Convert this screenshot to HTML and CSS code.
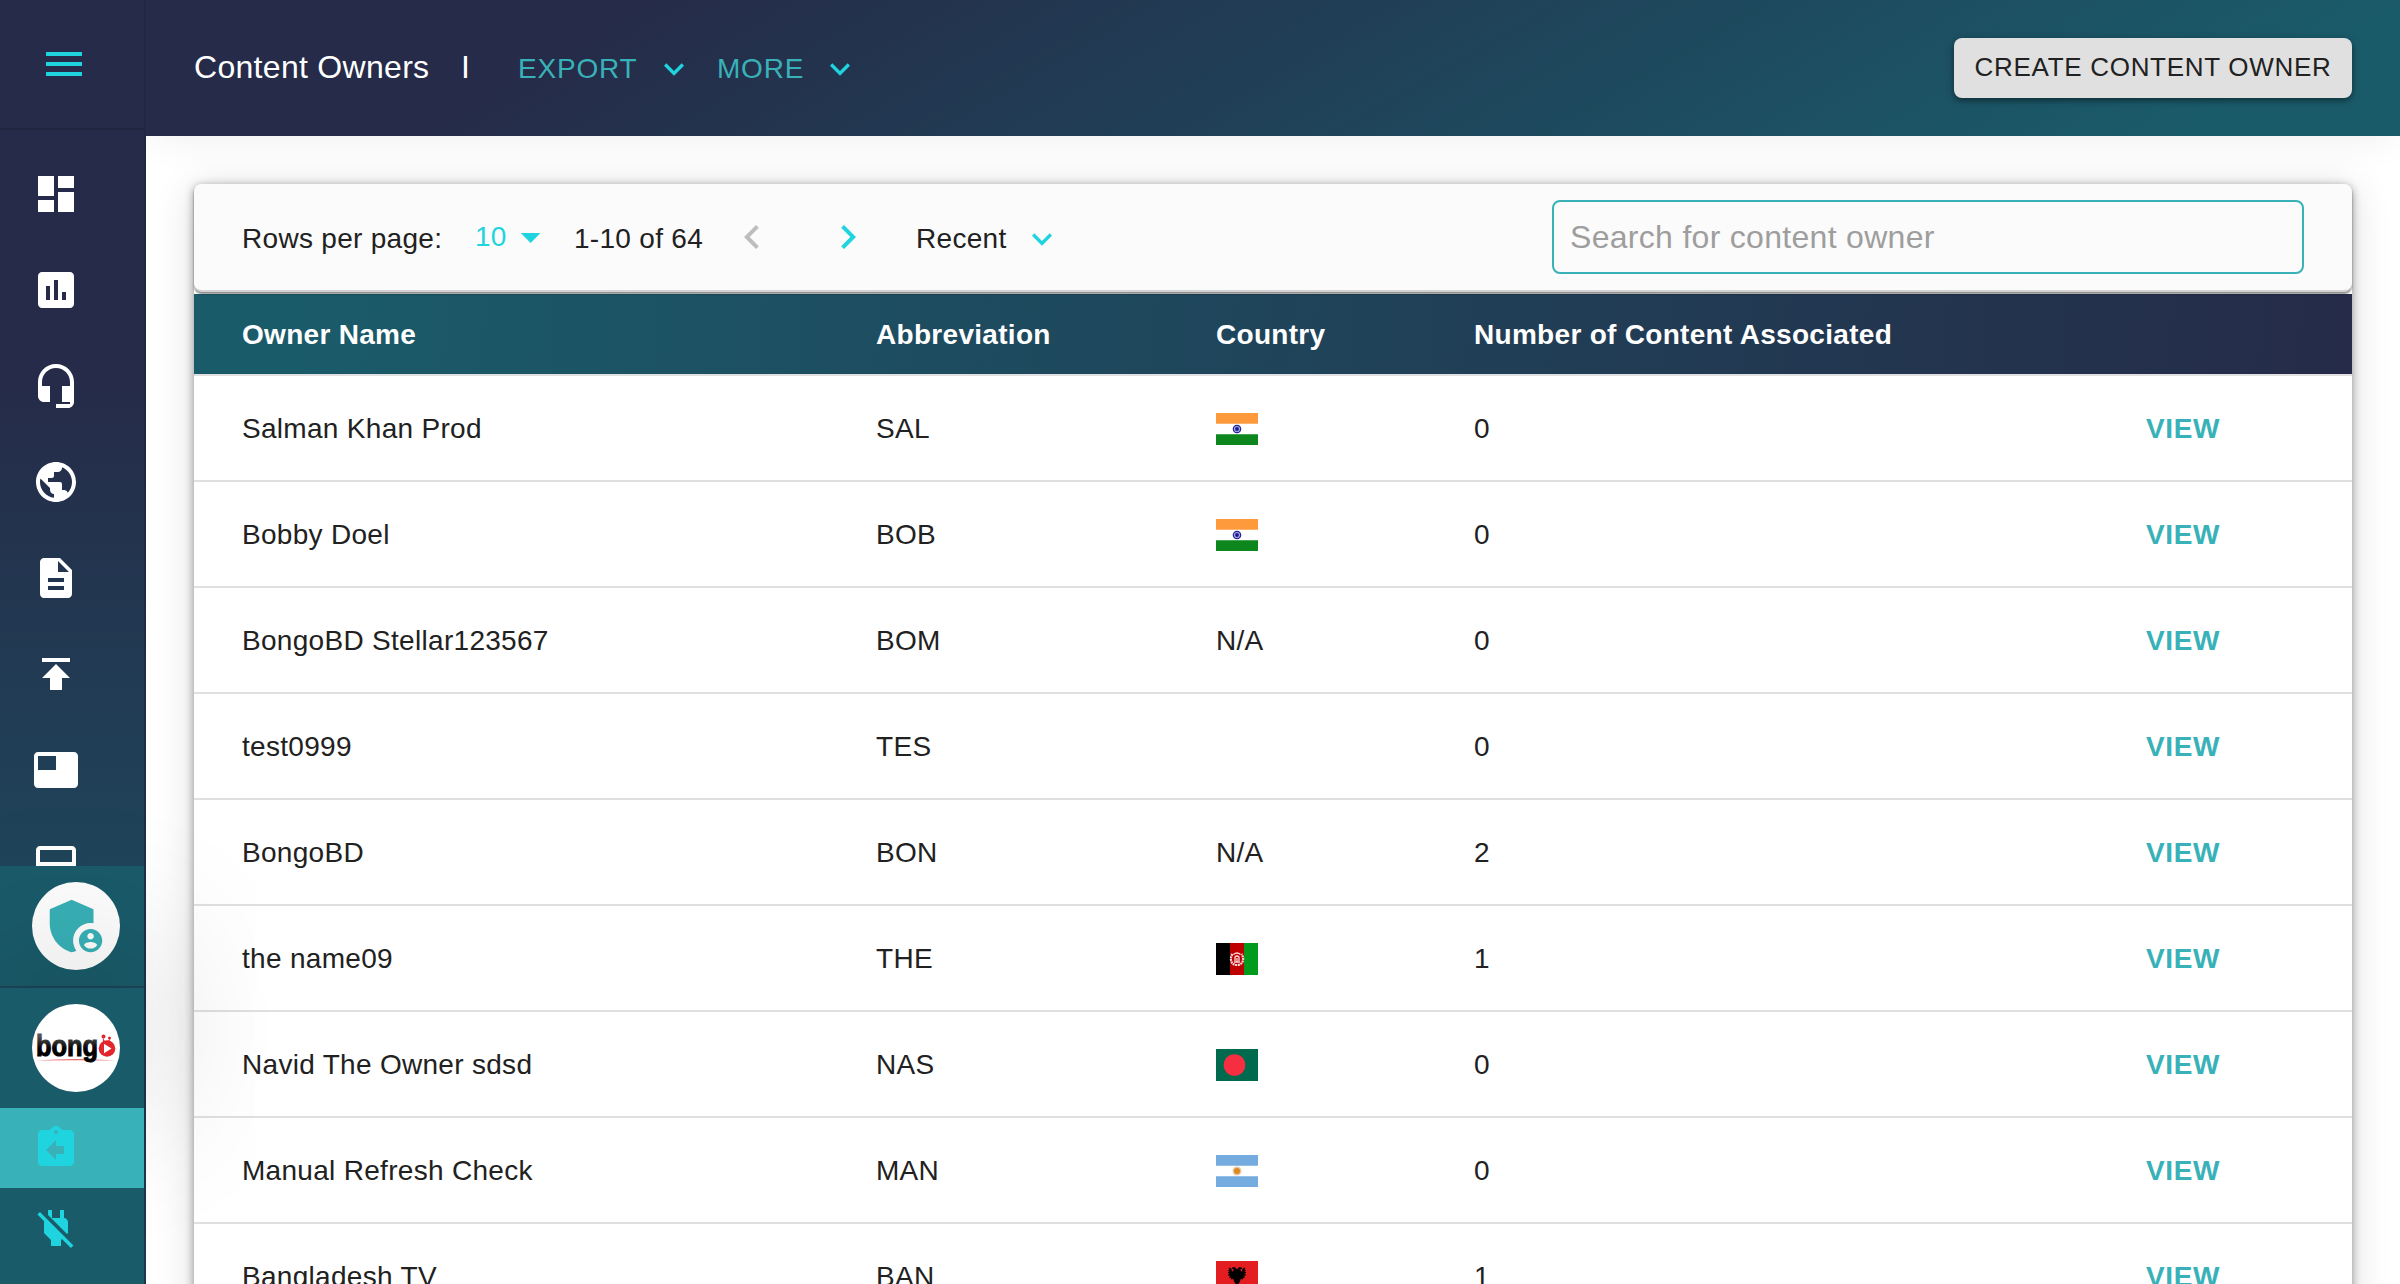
FILE: index.html
```html
<!DOCTYPE html>
<html lang="en">
<head>
<meta charset="utf-8">
<title>Content Owners</title>
<link rel="stylesheet" href="styles.css">
</head>
<body>
<svg class="defs" width="0" height="0" aria-hidden="true">
  <symbol id="chevron-down" viewBox="0 0 24 24"><path d="M7.41 8.59L12 13.17l4.59-4.58L18 10l-6 6-6-6 1.41-1.41z"/></symbol>
  <symbol id="flag-in" viewBox="0 0 42 32"><path fill="#fff" d="M0 0h42v32H0z"/><path fill="#ff9a3c" d="M0 0h42v10.7H0z"/><path fill="#0c861d" d="M0 21.3h42V32H0z"/><circle cx="21" cy="16" r="3.7" fill="#a5a5dc" stroke="#22229a" stroke-width="1.2"/><circle cx="21" cy="16" r="1.9" fill="#1a1a96"/></symbol>
  <symbol id="flag-af" viewBox="0 0 42 32"><path d="M0 0h14v32H0z"/><path fill="#bf0000" d="M14 0h14v32H14z"/><path fill="#009a1c" d="M28 0h14v32H28z"/><g fill="none" stroke="#fff" stroke-opacity=".85"><path stroke-width="2.2" stroke-dasharray="2 .6" d="M16.500 11c-3 4-2 11 4.500 11s7.500-7 4.500-11"/><path stroke-width="1.300" d="M17.500 11.500q3.500-3 7 0M18 19h6M19 18v-4q2-2 4 0v4M21 15v4"/></g></symbol>
  <symbol id="flag-bd" viewBox="0 0 42 32"><path fill="#006a4e" d="M0 0h42v32H0z"/><circle cx="18.500" cy="16" r="10.800" fill="#f62e42"/></symbol>
  <symbol id="flag-ar" viewBox="0 0 42 32"><path fill="#fff" d="M0 0h42v32H0z"/><path fill="#74acdf" d="M0 0h42v10.7H0zM0 21.300h42V32H0z"/><circle cx="21" cy="16" r="4.500" fill="#d9a26a" fill-opacity=".6"/><circle cx="21" cy="16" r="3" fill="#d98a1c"/></symbol>
  <symbol id="flag-al" viewBox="0 0 42 32"><path fill="#e41e20" d="M0 0h42v32H0z"/><path stroke="#000" stroke-width=".8" d="M21 9l-2-2.500-3 .500 2 1.500-.5 2.500-2-.5-.5-3-2-.5 1 2-1.500.5 1.500 1.500-2 .5 2.300 1.500-2 1 2.700 1-1.500 1.300 2.500.2-1 1.500 2.500-.5 1 3 2.500 4 2.500-4 1-3 2.500.5-1-1.500 2.500-.2-1.500-1.300 2.700-1-2-1 2.300-1.500-2-.5 1.500-1.500-1.500-.5 1-2-2 .5-.5 3-2 .5-.5-2.500 2-1.500-3-.5z"/></symbol>
</svg>

<div class="app">
  <aside class="sidebar">
    <div class="sidebar-top">
      <svg class="icon cyan" viewBox="0 0 24 24"><path d="M3 18h18v-2H3v2zm0-5h18v-2H3v2zm0-7v2h18V6H3z"/></svg>
    </div>
    <nav class="nav">
      <a><svg class="icon" viewBox="0 0 24 24"><path d="M3 13h8V3H3v10zm0 8h8v-6H3v6zm10 0h8V11h-8v10zm0-18v6h8V3h-8z"/></svg></a>
      <a><svg class="icon" viewBox="0 0 24 24"><path d="M19 3H5c-1.100 0-2 .9-2 2v14c0 1.100.9 2 2 2h14c1.100 0 2-.9 2-2V5c0-1.100-.9-2-2-2zM9 17H7v-7h2v7zm4 0h-2V7h2v10zm4 0h-2v-4h2v4z"/></svg></a>
      <a><svg class="icon" viewBox="0 0 24 24"><path d="M12 1c-4.970 0-9 4.030-9 9v7c0 1.660 1.340 3 3 3h3v-8H5v-2c0-3.870 3.130-7 7-7s7 3.130 7 7v2h-4v8h4v1h-7v2h6c1.660 0 3-1.340 3-3V10c0-4.970-4.030-9-9-9z"/></svg></a>
      <a><svg class="icon" viewBox="0 0 24 24"><path d="M12 2C6.480 2 2 6.480 2 12s4.480 10 10 10 10-4.480 10-10S17.520 2 12 2zm-1 17.930c-3.950-.49-7-3.850-7-7.930 0-.62.08-1.210.21-1.790L9 15v1c0 1.100.9 2 2 2v1.930zm6.900-2.540c-.26-.81-1-1.390-1.900-1.390h-1v-3c0-.55-.45-1-1-1H8v-2h2c.55 0 1-.45 1-1V7h2c1.100 0 2-.9 2-2v-.41c2.930 1.190 5 4.060 5 7.410 0 2.080-.8 3.970-2.100 5.390z"/></svg></a>
      <a><svg class="icon" viewBox="0 0 24 24"><path d="M14 2H6c-1.100 0-1.990.9-1.990 2L4 20c0 1.100.89 2 1.990 2H18c1.100 0 2-.9 2-2V8l-6-6zm2 16H8v-2h8v2zm0-4H8v-2h8v2zm-3-5V3.500L18.500 9H13z"/></svg></a>
      <a><svg class="icon" viewBox="0 0 24 24"><path d="M5 4v2h14V4H5zm0 10h4v6h6v-6h4l-7-7-7 7z"/></svg></a>
      <a><svg class="icon" viewBox="0 0 24 24"><path d="M21 3H3c-1.100 0-2 .9-2 2v14c0 1.100.9 2 2 2h18c1.100 0 2-.9 2-2V5c0-1.100-.9-2-2-2zm-9 9H3V5h9v7z"/></svg></a>
      <a><svg class="icon" viewBox="0 0 24 24"><path d="M20 2H4c-1.100 0-2 .9-2 2v8.500h20V4c0-1.100-.9-2-2-2zm0 8H4V4h16v6z"/></svg></a>
    </nav>
    <div class="account admin">
      <div class="avatar">
        <svg class="shield" viewBox="0 0 24 24"><path d="M17 11c.34 0 .67.04 1 .09V6.270L10.500 3 3 6.270v4.910c0 4.540 3.200 8.790 7.500 9.820.55-.13 1.080-.32 1.600-.55-.69-.98-1.100-2.170-1.100-3.450 0-3.310 2.690-6 6-6z"/><path d="M17 13c-2.210 0-4 1.790-4 4s1.790 4 4 4 4-1.790 4-4-1.790-4-4-4zm0 1.380c.62 0 1.120.51 1.120 1.120s-.51 1.120-1.120 1.120-1.120-.51-1.120-1.120.5-1.120 1.120-1.120zm0 5.370c-.93 0-1.740-.46-2.240-1.170.05-.72 1.510-1.080 2.240-1.080s2.190.36 2.240 1.080c-.5.71-1.310 1.170-2.240 1.170z"/></svg>
      </div>
    </div>
    <div class="account tenant">
      <div class="avatar">
        <svg class="bongo" viewBox="0 0 88 88">
          <defs><linearGradient id="ink" x1="0" y1="0" x2="0" y2="1"><stop offset=".2" stop-color="#555"/><stop offset=".6" stop-color="#000"/></linearGradient></defs>
          <path fill="#e8696c" d="M4 56.600q40-3 80 0-40-.6-80 0z"/>
          <text class="bongo-word" x="4" y="51.500" textLength="62" lengthAdjust="spacingAndGlyphs" fill="url(#ink)" stroke="url(#ink)">bong</text>
          <g fill="#e3262c"><circle cx="75" cy="44.500" r="8.300"/><circle cx="71.500" cy="32.500" r="2"/><circle cx="77.500" cy="34" r="1.500"/><path d="M70.700 33l2.300 5h-1.800zM78.200 34l-1 4h-1.800z"/></g>
          <path fill="#fff" d="M72 39.800v9.400l7.500-4.700z"/>
        </svg>
      </div>
    </div>
    <div class="quick">
      <a class="active"><svg class="icon cyan" viewBox="0 0 24 24"><path d="M19 3h-4.180C14.400 1.840 13.300 1 12 1s-2.400.84-2.820 2H5c-1.100 0-2 .9-2 2v14c0 1.100.9 2 2 2h14c1.100 0 2-.9 2-2V5c0-1.100-.9-2-2-2zm-7 0c.55 0 1 .45 1 1s-.45 1-1 1-1-.45-1-1 .45-1 1-1zm4 12h-4v3l-5-5 5-5v3h4v4z"/></svg></a>
      <a><svg class="icon cyan" viewBox="0 0 24 24"><path d="M18 14.490V9c0-1-1.010-2.010-2-2V3h-2v4h-4V3H8v2.480l9.510 9.500.49-.49zm-1.760 1.770L7.200 7.200l-.01.01L3.980 4 2.710 5.250l3.360 3.360C6.040 8.740 6 8.870 6 9v5.480L9.500 18v3h5v-3l.48-.48L19.450 22l1.260-1.280-4.470-4.460z"/></svg></a>
    </div>
  </aside>

  <div class="page">
    <header class="header">
      <h1 class="title">Content Owners</h1>
      <span class="divider">I</span>
      <button class="menu">EXPORT<svg viewBox="0 0 24 24"><use href="#chevron-down"/></svg></button>
      <button class="menu more">MORE<svg viewBox="0 0 24 24"><use href="#chevron-down"/></svg></button>
      <button class="create">CREATE CONTENT OWNER</button>
    </header>

    <main class="main">
      <section class="card">
        <div class="toolbar">
          <span class="rows-label">Rows per page:</span>
          <span class="rows-value">10<svg viewBox="0 0 24 24"><path d="M7 10l5 5 5-5z"/></svg></span>
          <span class="range">1-10 of 64</span>
          <svg class="pager prev" viewBox="0 0 24 24"><path d="M15.410 7.410L14 6l-6 6 6 6 1.410-1.410L10.830 12z"/></svg>
          <svg class="pager next" viewBox="0 0 24 24"><path d="M10 6L8.590 7.410 13.170 12l-4.580 4.590L10 18l6-6z"/></svg>
          <span class="sort">Recent<svg viewBox="0 0 24 24"><use href="#chevron-down"/></svg></span>
          <input class="search" type="text" placeholder="Search for content owner">
        </div>
        <div class="table">
          <div class="row head"><span>Owner Name</span><span>Abbreviation</span><span>Country</span><span>Number of Content Associated</span><span></span></div>
          <div class="row"><span>Salman Khan Prod</span><span>SAL</span><span><svg class="flag"><use href="#flag-in"/></svg></span><span>0</span><a>VIEW</a></div>
          <div class="row"><span>Bobby Doel</span><span>BOB</span><span><svg class="flag"><use href="#flag-in"/></svg></span><span>0</span><a>VIEW</a></div>
          <div class="row"><span>BongoBD Stellar123567</span><span>BOM</span><span>N/A</span><span>0</span><a>VIEW</a></div>
          <div class="row"><span>test0999</span><span>TES</span><span></span><span>0</span><a>VIEW</a></div>
          <div class="row"><span>BongoBD</span><span>BON</span><span>N/A</span><span>2</span><a>VIEW</a></div>
          <div class="row"><span>the name09</span><span>THE</span><span><svg class="flag"><use href="#flag-af"/></svg></span><span>1</span><a>VIEW</a></div>
          <div class="row"><span>Navid The Owner sdsd</span><span>NAS</span><span><svg class="flag"><use href="#flag-bd"/></svg></span><span>0</span><a>VIEW</a></div>
          <div class="row"><span>Manual Refresh Check</span><span>MAN</span><span><svg class="flag"><use href="#flag-ar"/></svg></span><span>0</span><a>VIEW</a></div>
          <div class="row"><span>Bangladesh TV</span><span>BAN</span><span><svg class="flag"><use href="#flag-al"/></svg></span><span>1</span><a>VIEW</a></div>
        </div>
      </section>
    </main>
  </div>
</div>
</body>
</html>
```

FILE: styles.css
```css
:root {
  --navy: #252b48;
  --teal: #1a5b6a;
  --accent: #38b2b8;
  --cyan: #1fd4df;
  --line: #e0e0e0;
}

* { box-sizing: border-box; }

body {
  margin: 0;
  height: 1284px;
  overflow: hidden;
  background: #fff;
  color: #212121;
  font: 28px "Liberation Sans", Helvetica, Arial, sans-serif;
  letter-spacing: 0.3px;
}

.defs { display: none; }

.app {
  display: flex;
  height: 1284px;
  overflow: hidden;
}

/* Sidebar */
.sidebar {
  position: relative;
  z-index: 2;
  display: flex;
  flex-direction: column;
  flex: none;
  width: 146px;
  border-right: 2px solid rgba(30, 38, 62, 0.65);
  background: linear-gradient(180deg, var(--navy) 30%, var(--teal) 100%) border-box;
}

.sidebar-top {
  flex: none;
  height: 130px;
  padding: 40px 0 0 40px;
  border-bottom: 2px solid #20263f;
}

.icon {
  display: block;
  width: 48px;
  height: 48px;
  fill: #fff;
}

.icon.cyan { fill: var(--cyan); }

.nav {
  display: flex;
  flex-direction: column;
  gap: 48px;
  flex: none;
  height: 736px;
  padding: 40px 0 0 32px;
  overflow: hidden;
}

.account {
  flex: none;
  height: 122px;
  padding: 16px 0 0 32px;
  background: var(--teal);
}

.account.admin { border-bottom: 2px solid #1d4458; }

.account.tenant {
  height: 120px;
  box-shadow: 0 -22px 170px rgba(0, 0, 0, 0.23);
}

.avatar {
  display: flex;
  align-items: center;
  justify-content: center;
  width: 88px;
  height: 88px;
  border-radius: 50%;
  background: #fff;
}

.shield {
  width: 70px;
  height: 70px;
  fill: var(--accent);
}

.bongo {
  width: 88px;
  height: 88px;
}

.bongo-word {
  font: bold 29px "Liberation Sans", Arial, sans-serif;
  letter-spacing: 0;
  stroke-width: 1px;
}

.quick {
  position: relative;
  flex: 1;
  background: var(--teal);
}

.quick a {
  display: flex;
  align-items: center;
  height: 80px;
  padding-left: 32px;
}

.quick .active { background: var(--accent); }

/* Header */
.page {
  flex: 1;
  min-width: 0;
}

.header {
  display: flex;
  align-items: center;
  height: 136px;
  padding: 0 48px 0 48px;
  background: linear-gradient(150deg, var(--navy) 20%, var(--teal) 91%);
  box-shadow: 0 8px 40px -8px rgba(0, 0, 0, 0.08);
}

.title {
  width: 267px;
  margin: 0;
  padding-bottom: 2px;
  color: #fff;
  font-size: 32px;
  font-weight: 400;
}

.divider {
  width: 57px;
  padding-bottom: 2px;
  color: #fff;
  font-size: 32px;
}

.menu {
  display: flex;
  align-items: center;
  justify-content: space-between;
  width: 176px;
  padding: 1px 0 0;
  border: 0;
  background: none;
  color: var(--accent);
  font: inherit;
  letter-spacing: 0.8px;
}

.menu.more {
  width: 143px;
  margin-left: 23px;
}

.menu svg,
.sort svg {
  width: 40px;
  height: 40px;
  fill: var(--cyan);
}

.create {
  width: 398px;
  height: 60px;
  margin-left: auto;
  padding: 0 0 2px;
  border: 0;
  border-radius: 8px;
  background: #e0e0e0;
  box-shadow: 0 2px 8px rgba(0, 0, 0, 0.3), 0 3px 4px rgba(0, 0, 0, 0.2);
  color: #212121;
  font: 26px "Liberation Sans", Helvetica, Arial, sans-serif;
  letter-spacing: 0.7px;
  white-space: nowrap;
}

/* Card */
.main { padding: 48px; }

.card {
  height: 1300px;
  border-radius: 8px;
  background: #fff;
  box-shadow: 0 2px 10px rgba(0, 0, 0, 0.4), 0 4px 40px rgba(0, 0, 0, 0.14);
}

.toolbar {
  position: relative;
  display: flex;
  align-items: center;
  height: 108px;
  padding: 0 48px;
  border-bottom: 2px solid #d4d4d4;
  border-radius: 8px;
  background: #fbfbfb;
  box-shadow: 0 2px 2px rgba(0, 0, 0, 0.45);
}

.rows-label { width: 233px; padding-top: 3px; }

.rows-value {
  display: flex;
  align-items: center;
  justify-content: space-between;
  width: 76px;
  color: var(--cyan);
}

.rows-value svg {
  width: 48px;
  height: 48px;
  margin-right: -3px;
  fill: var(--cyan);
}

.range {
  width: 154px;
  margin-left: 23px;
  padding-top: 3px;
}

.pager {
  width: 48px;
  height: 48px;
}

.pager.prev { fill: #bdbdbd; }
.pager.next { margin-left: 48px; fill: var(--cyan); }

.sort {
  display: flex;
  align-items: center;
  justify-content: space-between;
  width: 146px;
  margin-left: 44px;
  padding-top: 3px;
}

.search {
  width: 752px;
  height: 74px;
  margin-left: auto;
  padding: 0 16px;
  border: 2px solid var(--accent);
  border-radius: 8px;
  background: transparent;
  font: 32px "Liberation Sans", Helvetica, Arial, sans-serif;
  letter-spacing: 0.3px;
}

.search::placeholder { color: #9e9e9e; }

/* Table */
.table { padding-top: 2px; }

.row {
  display: grid;
  grid-template-columns: 634px 340px 258px 672px 1fr;
  align-items: center;
  height: 106px;
  padding: 2px 48px 0;
  border-bottom: 2px solid var(--line);
}

.head {
  height: 82px;
  background: linear-gradient(95deg, var(--teal) 5%, var(--navy) 100%) padding-box;
  color: #fff;
  font-weight: 700;
}

.row a {
  color: var(--accent);
  font-weight: 700;
  letter-spacing: 0.6px;
}

.flag {
  display: block;
  width: 42px;
  height: 32px;
}
```
